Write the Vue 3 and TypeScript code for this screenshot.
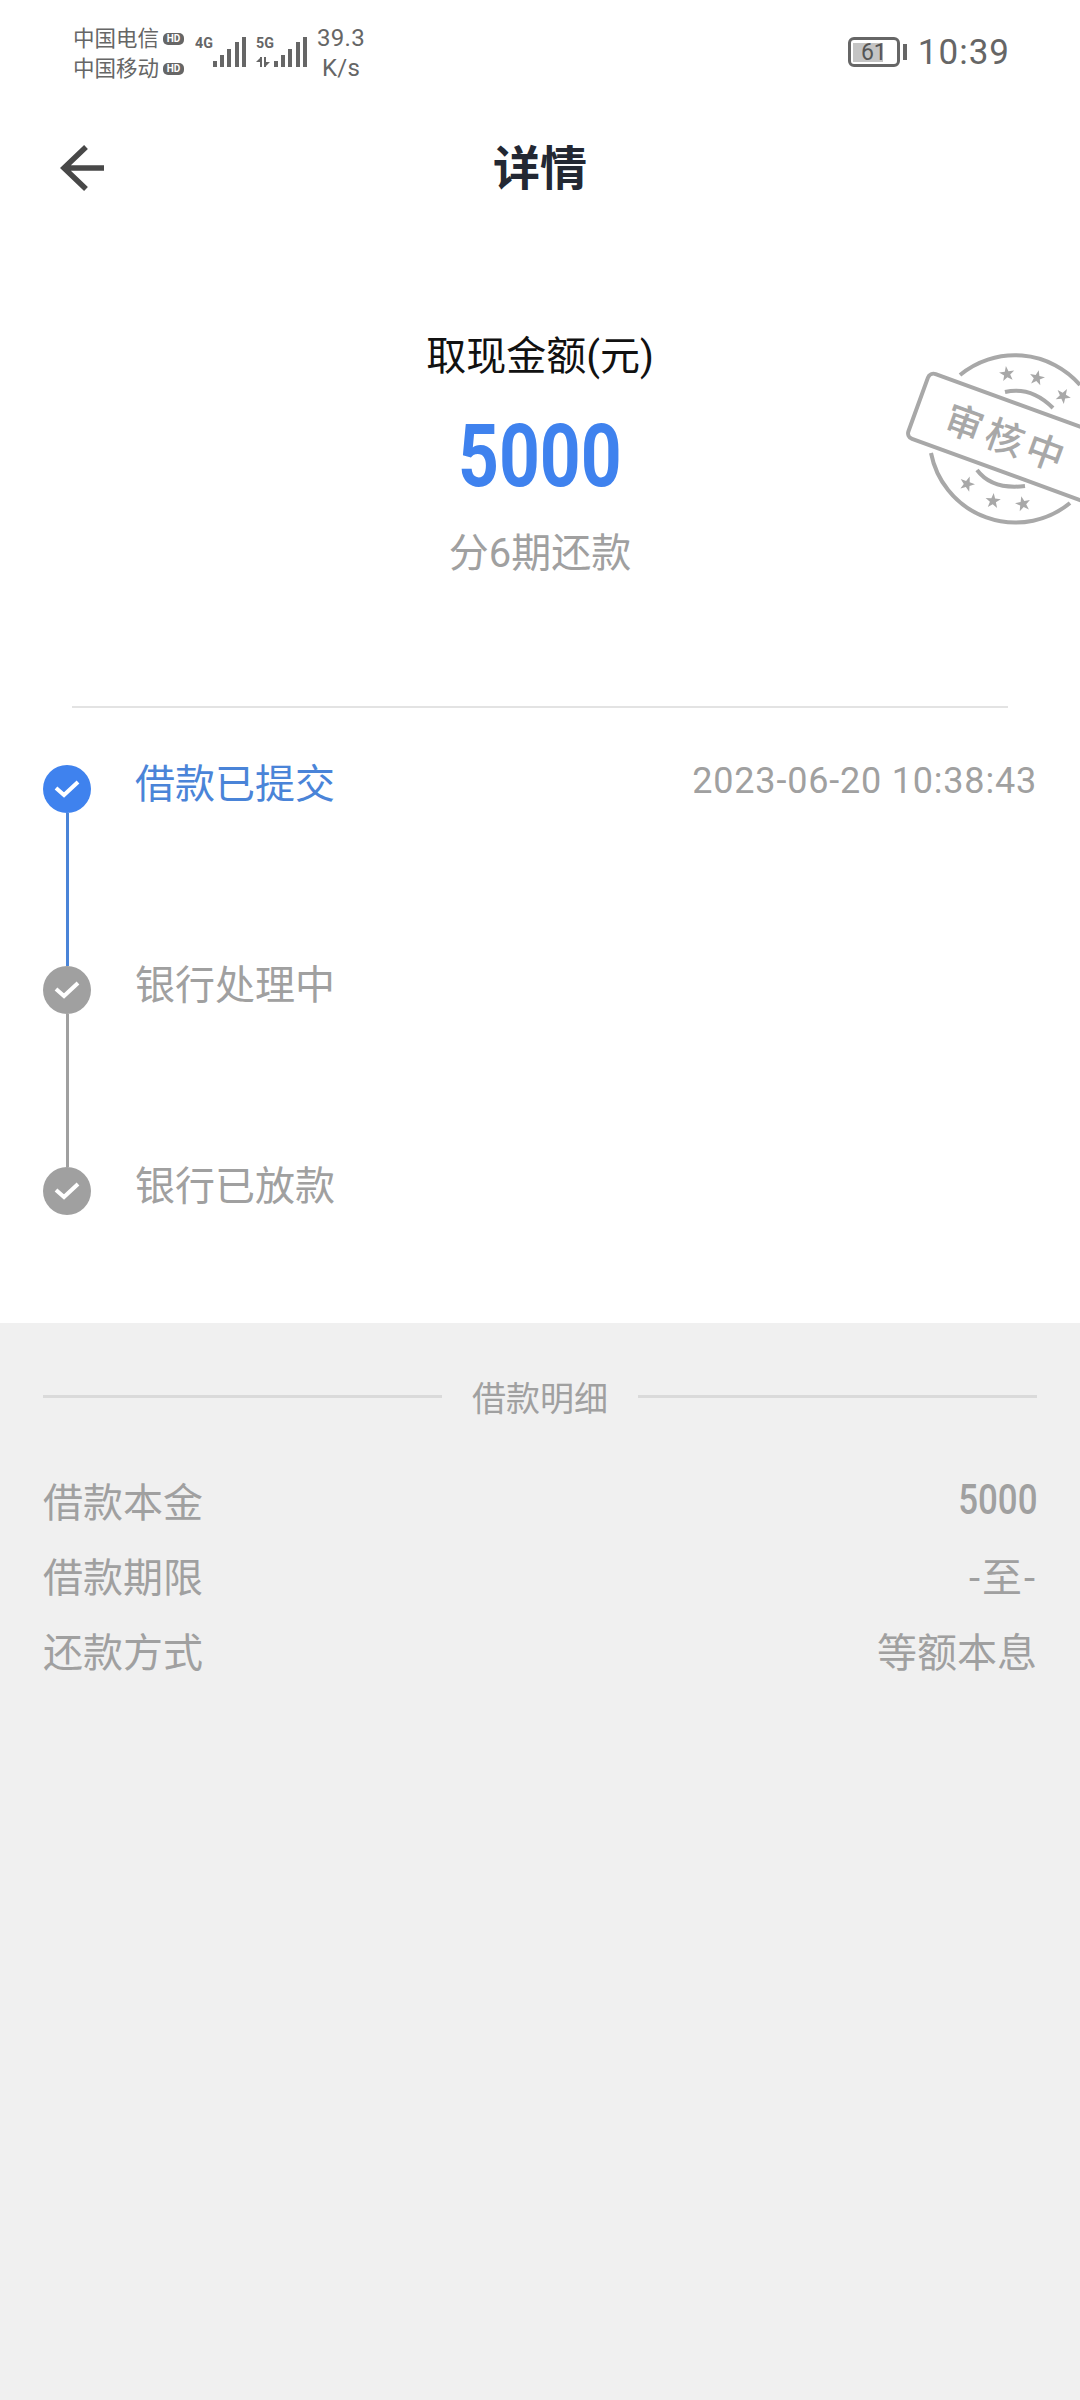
<script setup lang="ts">
interface Step {
  label: string;
  time?: string;
  done: boolean;
}

interface Row {
  label: string;
  value: string;
  kind?: string;
}

const steps: Step[] = [
  { label: '借款已提交', time: '2023-06-20 10:38:43', done: true },
  { label: '银行处理中', done: false },
  { label: '银行已放款', done: false }
];

const rows: Row[] = [
  { label: '借款本金', value: '5000', kind: 'numeric' },
  { label: '借款期限', value: '-至-', kind: 'spaced' },
  { label: '还款方式', value: '等额本息' }
];

const barHeights = [6, 12, 18, 25, 30];

// five-point star, x/y = centre, rot = degrees
function starPoints(x: number, y: number, rot: number): string {
  const pts: string[] = [];
  for (let i = 0; i < 10; i++) {
    const r = i % 2 === 0 ? 8 : 3.2;
    const a = ((rot - 90 + i * 36) * Math.PI) / 180;
    pts.push(`${(x + r * Math.cos(a)).toFixed(1)},${(y + r * Math.sin(a)).toFixed(1)}`);
  }
  return pts.join(' ');
}

const stars = [
  starPoints(1007, 374, -8),
  starPoints(1037, 378, 12),
  starPoints(1063, 396, 30),
  starPoints(967, 484, 20),
  starPoints(993, 501, 5),
  starPoints(1023, 504, -12)
];
</script>

<template>
  <div class="page">
    <div class="status-bar">
      <div class="carriers">
        <div class="carrier">中国电信<span class="hd">HD</span></div>
        <div class="carrier">中国移动<span class="hd">HD</span></div>
      </div>
      <div class="signal signal-4g">
        <div class="net"><span>4G</span></div>
        <div class="bars">
          <i v-for="h in barHeights" :key="h" :style="{ height: h + 'px' }"></i>
        </div>
      </div>
      <div class="signal signal-5g">
        <div class="net">
          <span>5G</span>
          <svg class="updown" width="15" height="10" viewBox="0 0 15 10">
            <path d="M4 0 V10 H6 V0 Z M0 5 L4 1 V5 Z M8 0 V10 H10 V0 Z M10 9 L14 5 H10 Z" fill="#666" />
          </svg>
        </div>
        <div class="bars">
          <i v-for="h in barHeights" :key="h" :style="{ height: h + 'px' }"></i>
        </div>
      </div>
      <div class="speed">
        <span>39.3</span>
        <span>K/s</span>
      </div>
      <div class="status-right">
        <div class="battery">
          <div class="battery-fill"></div>
          <span class="battery-num">61</span>
        </div>
        <div class="battery-nub"></div>
        <span class="clock">10:39</span>
      </div>
    </div>

    <div class="nav">
      <svg class="back" width="48" height="48" viewBox="0 0 48 48" fill="none">
        <path d="M28 3 L6 24 L28 45 M6 24 H46" stroke="#484848" stroke-width="5.5" />
      </svg>
      <span class="nav-title">详情</span>
    </div>

    <div class="summary">
      <div class="summary-label">取现金额(元)</div>
      <div class="summary-amount">5000</div>
      <div class="summary-sub">分6期还款</div>
    </div>

    <div class="divider"></div>

    <div class="timeline">
      <div v-for="(step, i) in steps" :key="step.label" class="step" :class="{ done: step.done }">
        <div class="step-rail">
          <div class="dot">
            <svg width="26" height="20" viewBox="0 0 26 20" fill="none">
              <path d="M2 9 L10 16 L24 3" stroke="#fff" stroke-width="4" />
            </svg>
          </div>
          <div v-if="i < steps.length - 1" class="rail-line"></div>
        </div>
        <span class="step-label">{{ step.label }}</span>
        <span v-if="step.time" class="step-time">{{ step.time }}</span>
      </div>
    </div>

    <div class="detail">
      <div class="detail-head">
        <span class="rule"></span>
        <span class="detail-title">借款明细</span>
        <span class="rule"></span>
      </div>
      <div v-for="row in rows" :key="row.label" class="detail-row">
        <span>{{ row.label }}</span>
        <span :class="row.kind">{{ row.value }}</span>
      </div>
    </div>

    <svg class="stamp" width="180" height="190" viewBox="900 345 180 190" fill="none">
      <path d="M960 375 A86 86 0 0 1 1080 385" stroke="#a8a8a8" stroke-width="4" />
      <path d="M931 453 A86 86 0 0 0 1070 503" stroke="#a8a8a8" stroke-width="4" />
      <path d="M1005 392 Q1031 386 1053 408" stroke="#a8a8a8" stroke-width="4" />
      <path d="M977 470 Q992 490 1025 486" stroke="#a8a8a8" stroke-width="4" />
      <polygon v-for="(s, i) in stars" :key="i" :points="s" fill="#a8a8a8" />
      <rect x="930" y="372" width="200" height="69" rx="6" transform="rotate(20 930 372)" fill="#fff" stroke="#a8a8a8" stroke-width="4" />
      <text x="1008" y="436" class="stamp-text" text-anchor="middle" dominant-baseline="central" transform="rotate(20 1008 436)">审核中</text>
    </svg>
  </div>
</template>

<style>
html,
body {
  margin: 0;
  background: #fff;
}
</style>

<style scoped>
.page {
  position: relative;
  width: 1080px;
  height: 2400px;
  overflow: hidden;
  display: flex;
  flex-direction: column;
  background: #fff;
  font-family: Roboto, "Noto Sans CJK SC", sans-serif;
  color: #a0a0a0;
}

.status-bar {
  height: 104px;
  flex: none;
  display: flex;
  align-items: flex-start;
  padding: 26px 70px 0 73px;
  box-sizing: border-box;
  color: #666;
}

.carriers {
  display: flex;
  flex-direction: column;
  gap: 4px;
  width: 122px;
}

.carrier {
  display: flex;
  align-items: center;
  height: 26px;
  font-size: 21.5px;
  line-height: 26px;
  white-space: nowrap;
}

.hd {
  margin-left: 4px;
  width: 21px;
  height: 12px;
  border-radius: 5px;
  background: #666;
  color: #fff;
  font-size: 10px;
  font-weight: 700;
  line-height: 12px;
  text-align: center;
}

.signal {
  display: flex;
  height: 30px;
  margin-top: 11px;
}

.signal-4g {
  width: 61px;
}

.signal-5g {
  width: 61px;
}

.net {
  position: relative;
  width: 18px;
  font-size: 15px;
  font-weight: 700;
  line-height: 13px;
}

.net span {
  display: block;
  transform: scaleX(0.95);
  transform-origin: left;
}

.updown {
  position: absolute;
  left: 0;
  bottom: 0;
}

.bars {
  display: flex;
  align-items: flex-end;
  gap: 3.2px;
}

.bars i {
  width: 4px;
  background: #666;
}

.speed {
  display: flex;
  flex-direction: column;
  align-items: center;
  font-size: 24px;
  line-height: 30px;
  letter-spacing: 0.3px;
  margin-top: -3px;
}

.status-right {
  margin-left: auto;
  margin-top: -3px;
  display: flex;
  align-items: center;
  height: 58px;
}

.battery {
  position: relative;
  width: 52px;
  height: 30px;
  border: 3px solid #666;
  border-radius: 6px;
  box-sizing: border-box;
}

.battery-fill {
  position: absolute;
  left: 2px;
  top: 3px;
  bottom: 2px;
  width: 30px;
  background: #c4c4c4;
}

.battery-num {
  position: absolute;
  left: 0;
  right: 0;
  top: 0;
  color: #555;
  font-size: 23px;
  line-height: 25px;
  text-align: center;
}

.battery-nub {
  width: 4px;
  height: 16px;
  margin-left: 3px;
  background: #666;
}

.clock {
  margin-left: 11px;
  font-size: 35px;
  letter-spacing: 1px;
}

.nav {
  position: relative;
  height: 120px;
  flex: none;
  display: flex;
  align-items: center;
  justify-content: center;
}

.back {
  position: absolute;
  left: 58px;
  top: 40px;
}

.nav-title {
  color: #232833;
  font-size: 47px;
  font-weight: 700;
}

.summary {
  flex: none;
  display: flex;
  flex-direction: column;
  align-items: center;
  padding-top: 103px;
  height: 482px;
  box-sizing: border-box;
}

.summary-label {
  color: #111;
  font-size: 40px;
  line-height: 60px;
}

.summary-amount {
  margin-top: 21px;
  color: #3f82ee;
  font-size: 87px;
  font-weight: 700;
  line-height: 96px;
  transform: scaleX(0.82);
}

.summary-sub {
  margin-top: 20px;
  font-size: 40px;
  line-height: 60px;
}

.divider {
  flex: none;
  height: 2px;
  margin: 0 72px;
  background: #e3e3e3;
}

.timeline {
  flex: none;
  height: 615px;
  padding-top: 57px;
  box-sizing: border-box;
}

.step {
  position: relative;
  display: flex;
  align-items: center;
  height: 48px;
  margin-bottom: 153px;
  padding: 0 43px;
  color: #a0a0a0;
}

.step.done {
  color: #4a84d8;
}

.step-rail {
  position: relative;
  width: 48px;
  height: 48px;
  margin-right: 44px;
}

.dot {
  position: relative;
  z-index: 1;
  width: 48px;
  height: 48px;
  display: flex;
  align-items: center;
  justify-content: center;
  border-radius: 50%;
  background: #a0a0a0;
}

.done .dot {
  background: #3f82ee;
}

.rail-line {
  position: absolute;
  left: 23px;
  top: 48px;
  width: 3px;
  height: 153px;
  background: #a0a0a0;
}

.done .rail-line {
  background: #4a84d8;
}

.step-label {
  font-size: 40px;
  line-height: 48px;
  transform: translateY(-4px);
}

.step-time {
  margin-left: auto;
  color: #a0a0a0;
  font-size: 36px;
  letter-spacing: 0.8px;
  transform: translateY(-8px);
}

.detail {
  flex: 1;
  padding: 48px 43px 0;
  background: #f0f0f0;
}

.detail-head {
  display: flex;
  align-items: center;
  margin-bottom: 41px;
  height: 50px;
}

.rule {
  flex: 1;
  height: 3px;
  background: #dadada;
}

.detail-title {
  margin: 0 30px;
  font-size: 34px;
}

.detail-row {
  display: flex;
  justify-content: space-between;
  align-items: center;
  height: 75px;
  font-size: 40px;
}

.numeric {
  font-size: 42px;
  font-weight: 500;
  transform: scaleX(0.83);
  transform-origin: right;
}

.spaced {
  letter-spacing: 2px;
}

.stamp {
  position: absolute;
  left: 900px;
  top: 345px;
}

.stamp-text {
  fill: #a8a8a8;
  font-size: 38px;
  font-weight: 500;
  letter-spacing: 5px;
  font-family: "Noto Sans CJK SC", sans-serif;
}
</style>
